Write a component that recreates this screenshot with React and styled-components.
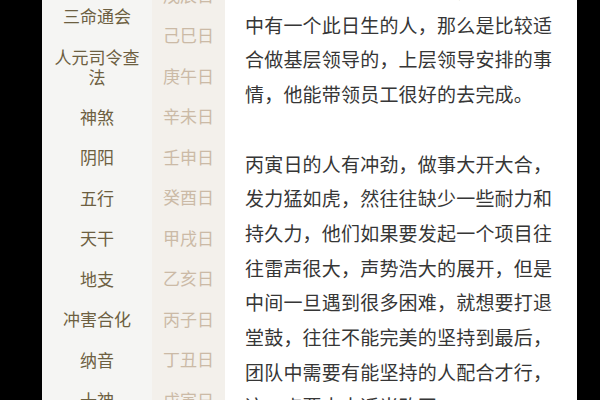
import React from 'react';
import styled, { createGlobalStyle } from 'styled-components';

const GlobalStyle = createGlobalStyle`
  html, body {
    margin: 0;
    padding: 0;
    background: #000;
  }
  body {
    font-family: "Noto Sans CJK SC", "Noto Sans", sans-serif;
  }
`;

const topics = [
  ['三命通会'],
  ['人元司令查', '法'],
  ['神煞'],
  ['阴阳'],
  ['五行'],
  ['天干'],
  ['地支'],
  ['冲害合化'],
  ['纳音'],
  ['十神'],
];

const days = ['戊辰日', '己巳日', '庚午日', '辛未日', '壬申日', '癸酉日', '甲戌日', '乙亥日', '丙子日', '丁丑日', '戊寅日'];

const paragraphs = [
  [
    '丙寅日生的人有领导能力，若是团队',
    '中有一个此日生的人，那么是比较适',
    '合做基层领导的，上层领导安排的事',
    '情，他能带领员工很好的去完成。',
  ],
  [
    '丙寅日的人有冲劲，做事大开大合，',
    '发力猛如虎，然往往缺少一些耐力和',
    '持久力，他们如果要发起一个项目往',
    '往雷声很大，声势浩大的展开，但是',
    '中间一旦遇到很多困难，就想要打退',
    '堂鼓，往往不能完美的坚持到最后，',
    '团队中需要有能坚持的人配合才行，',
    '这一点要大大适当改正。',
  ],
];

const Screen = styled.div`
  height: 400px;
  padding: 0 23px 0 42px;
  background: #000;
  overflow: hidden;
`;

const Panel = styled.div`
  display: flex;
  height: 100%;
  overflow: hidden;
`;

const TopicColumn = styled.div`
  flex: 0 0 110px;
  background: #f5f5f3;
  display: flex;
  flex-direction: column;
  margin-top: 0;
`;

const TopicList = styled.div`
  display: flex;
  flex-direction: column;
  margin-top: -4px;
`;

const TopicItem = styled.div`
  height: ${(p) => (p.$lines > 1 ? 60 : 40.5)}px;
  display: flex;
  flex-direction: column;
  align-items: center;
  justify-content: center;
  text-align: center;
  font-size: 17px;
  line-height: 20px;
  color: #6d5f41;
  flex-shrink: 0;
`;

const DayColumn = styled.div`
  flex: 0 0 73px;
  background: #f3f0eb;
  display: flex;
  flex-direction: column;
`;

const DayList = styled.div`
  display: flex;
  flex-direction: column;
  margin-top: -26px;
`;

const DayItem = styled.div`
  height: 40.5px;
  flex-shrink: 0;
  display: flex;
  align-items: center;
  justify-content: center;
  font-size: 17px;
  color: #cbbaa6;
`;

const Article = styled.div`
  flex: 1;
  background: #fff;
  padding-left: 20px;
`;

const ArticleBody = styled.div`
  margin-top: -27px;
  font-size: 19px;
  letter-spacing: 0.2px;
  line-height: 34.7px;
  color: #363636;
`;

const Paragraph = styled.p`
  margin: 0 0 34.7px;
`;

const Line = styled.span`
  display: block;
  white-space: nowrap;
`;

export default function App() {
  return (
    <>
      <GlobalStyle />
      <Screen>
        <Panel>
          <TopicColumn>
            <TopicList>
              {topics.map((t, i) => (
                <TopicItem key={i} $lines={t.length}>
                  {t.map((l, j) => (
                    <span key={j}>{l}</span>
                  ))}
                </TopicItem>
              ))}
            </TopicList>
          </TopicColumn>
          <DayColumn>
            <DayList>
              {days.map((d) => (
                <DayItem key={d}>{d}</DayItem>
              ))}
            </DayList>
          </DayColumn>
          <Article>
            <ArticleBody>
              {paragraphs.map((p, i) => (
                <Paragraph key={i}>
                  {p.map((l, j) => (
                    <Line key={j}>{l}</Line>
                  ))}
                </Paragraph>
              ))}
            </ArticleBody>
          </Article>
        </Panel>
      </Screen>
    </>
  );
}
